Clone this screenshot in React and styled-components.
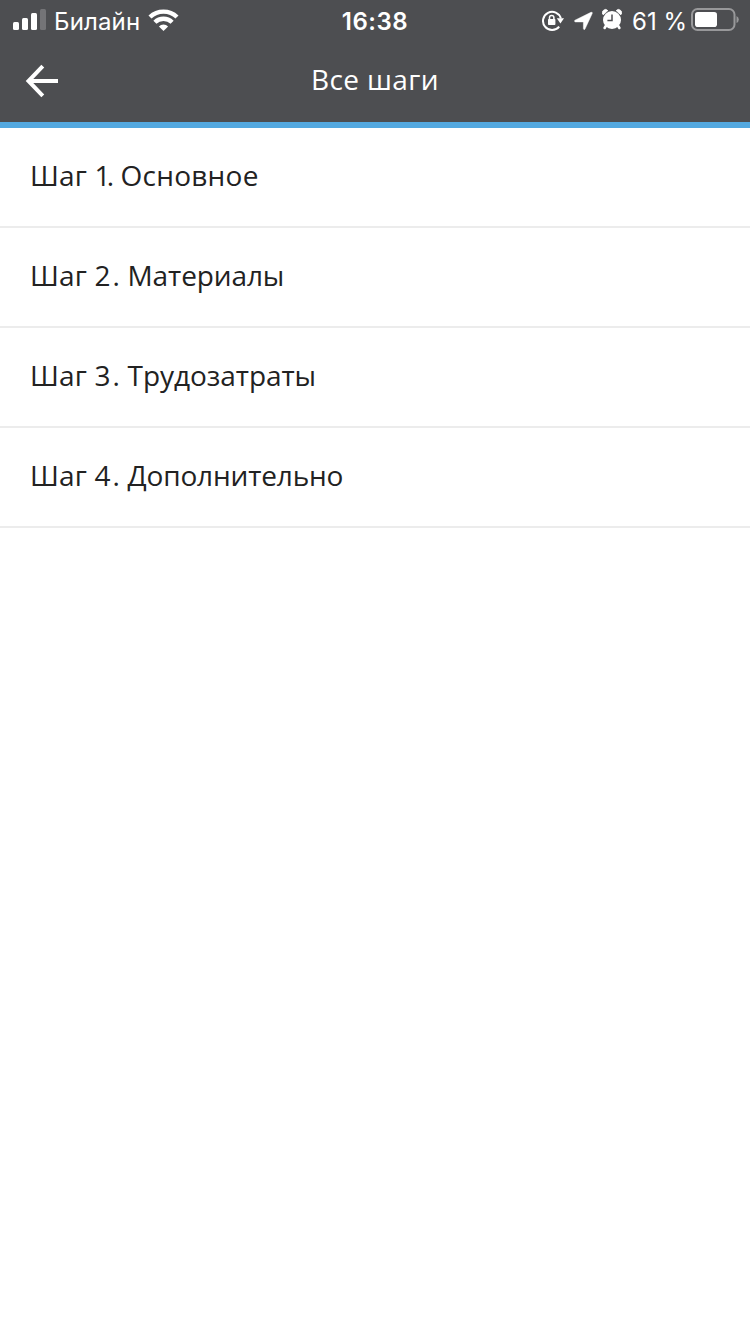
import React from "react";
import styled, { createGlobalStyle } from "styled-components";

const GlobalStyle = createGlobalStyle`
  * { box-sizing: border-box; }
  body { margin: 0; background: #fff; }
`;

const Screen = styled.div`
  width: 750px;
  min-height: 1334px;
  background: #fff;
  font-family: "Open Sans", "Noto Sans", sans-serif;
`;

const Header = styled.header`
  height: 128px;
  background: #4d4e51;
  border-bottom: 6px solid #54a9e0;
  color: #fff;
`;

const StatusBar = styled.div`
  display: grid;
  grid-template-columns: 1fr auto 1fr;
  align-items: center;
  height: 40px;
  padding: 0 11px 0 13px;
  font-family: Inter, "Liberation Sans", sans-serif;
  font-size: 24px;
  line-height: 37px;
`;

const StatusGroup = styled.div`
  display: flex;
  align-items: center;
  justify-content: ${(p) => (p.$end ? "flex-end" : "flex-start")};
  height: 40px;
`;

const StatusText = styled.span`
  letter-spacing: ${(p) => p.$spacing || 0}px;
  margin: ${(p) => p.$margin || 0};
  white-space: nowrap;
  padding-top: 3px;
`;

const Time = styled.time`
  font-weight: 600;
  letter-spacing: 0.5px;
  padding-top: 3px;
  margin-right: 2px;
`;

const Glyph = styled.svg`
  display: block;
  flex: none;
  margin-left: ${(p) => p.$gap || 0}px;
`;

const NavBar = styled.nav`
  display: grid;
  grid-template-columns: 80px 1fr 80px;
  align-items: center;
  height: 82px;
`;

const BackButton = styled.button`
  display: flex;
  align-items: center;
  height: 82px;
  padding: 0 0 0 24px;
  border: 0;
  background: none;
  color: inherit;
`;

const Title = styled.h1`
  margin: 0;
  font-size: 28px;
  font-weight: 400;
  line-height: 78px;
  height: 82px;
  text-align: center;
  letter-spacing: 0.4px;
`;

const StepList = styled.ul`
  margin: 0;
  padding: 0;
  list-style: none;
`;

const Step = styled.li`
  display: flex;
  height: 100px;
  padding-left: 30px;
  border-bottom: 2px solid #ececec;
  color: #222;
  font-size: 28px;
  line-height: 94px;
  white-space: pre;
`;

const StepNumber = styled.span`
  letter-spacing: 0.15px;
  margin-right: ${(p) => p.$gap || 0}px;
`;

const Digit = styled.span`
  letter-spacing: ${(p) => p.$spacing}px;
`;

const StepName = styled.span`
  letter-spacing: ${(p) => p.$spacing}px;
`;

const steps = [
  { number: 1, name: "Основное", digitSpacing: -3.6, gap: -1.25, spacing: 0.25 },
  { number: 2, name: "Материалы", digitSpacing: 2.15, spacing: -0.1 },
  { number: 3, name: "Трудозатраты", digitSpacing: 2.15, spacing: -0.05 },
  { number: 4, name: "Дополнительно", digitSpacing: 2.15, spacing: -0.15 },
];

const Signal = () => (
  <Glyph width="33" height="40" fill="#fff">
    <rect x="0" y="22" width="6" height="8" rx="1.5" />
    <rect x="9" y="18" width="6" height="12" rx="1.5" />
    <rect x="18" y="13" width="6" height="17" rx="1.5" />
    <rect x="27" y="9" width="6" height="21" rx="1.5" opacity="0.22" />
  </Glyph>
);

const Wifi = () => (
  <Glyph width="31" height="40" $gap={8}>
    <g fill="none" stroke="#fff" strokeWidth="4.4">
      <path d="M2 17 A19.6 19.6 0 0 1 29 17" />
      <path d="M6.9 22.2 A12.3 12.3 0 0 1 24.1 22.2" />
    </g>
    <path d="M10.9 26.4 A6.5 6.5 0 0 1 20.1 26.4 L15.5 31 Z" fill="#fff" />
  </Glyph>
);

const RotationLock = () => (
  <Glyph width="22" height="40" fill="none">
    <path d="M17.2 26.6 A9.1 9.1 0 1 1 18.9 18.5" stroke="#fff" strokeWidth="2" />
    <path d="M14.8 18.3 H22 L18.4 23.6 Z" fill="#fff" />
    <rect x="6" y="19" width="7.4" height="6" rx="0.8" fill="#fff" />
    <path d="M7.5 20 V17.6 A2.2 2.2 0 0 1 11.9 17.6 V20" stroke="#fff" strokeWidth="1.5" />
  </Glyph>
);

const Location = () => (
  <Glyph width="19" height="40" $gap={10}>
    <path
      d="M1 20.2 L17 12.3 Q18.7 11.8 18.2 13.5 L11 29 Q9.9 30.6 9.4 28.6 V21.9 H1.4 Q-0.4 21.4 1 20.2 Z"
      fill="#fff"
      stroke="#fff"
      strokeWidth="0.5"
    />
  </Glyph>
);

const Alarm = () => (
  <Glyph width="20" height="40" $gap={9}>
    <circle cx="10" cy="20" r="9" fill="#fff" />
    <path d="M3.8 26 L2.6 28 M16.2 26 L17.4 28" stroke="#fff" strokeWidth="2.6" strokeLinecap="round" />
    <path d="M1.2 14.8 A3.1 3.1 0 0 1 5.8 10.6 Z M14.2 10.6 A3.1 3.1 0 0 1 18.8 14.8 Z" fill="#fff" stroke="#fff" strokeWidth="0.9" />
    <path d="M10 14.5 V20.6 H5.4" fill="none" stroke="#4d4e51" strokeWidth="1.5" />
  </Glyph>
);

const Battery = () => (
  <Glyph width="48" height="40" $gap={4}>
    <rect x="1" y="9" width="42.5" height="21" rx="5.5" fill="none" stroke="#98989a" strokeWidth="2" />
    <rect x="4" y="12" width="22" height="15" rx="2.8" fill="#fff" />
    <path d="M45.5 16 Q47.8 17 47.8 19.5 Q47.8 22 45.5 23 Z" fill="#98989a" />
  </Glyph>
);

export default function App() {
  return (
    <Screen>
      <GlobalStyle />
      <Header>
        <StatusBar>
          <StatusGroup>
            <Signal />
            <StatusText $margin="0 0 0 8px" $spacing={0.15}>Билайн</StatusText>
            <Wifi />
          </StatusGroup>
          <Time>16:38</Time>
          <StatusGroup $end>
            <RotationLock />
            <Location />
            <Alarm />
            <StatusText $margin="0 0 0 10px">61 %</StatusText>
            <Battery />
          </StatusGroup>
        </StatusBar>
        <NavBar>
          <BackButton aria-label="Назад">
            <Glyph width="36" height="36" fill="none" stroke="#fff" strokeWidth="4">
              <path d="M34 18 H5 M18.8 3.2 L4.5 18 L18.8 32.8" />
            </Glyph>
          </BackButton>
          <Title>Все шаги</Title>
        </NavBar>
      </Header>
      <StepList>
        {steps.map((step) => (
          <Step key={step.number}>
            <StepNumber $gap={step.gap}>
              {"Шаг "}
              <Digit $spacing={step.digitSpacing}>{step.number}</Digit>
              {". "}
            </StepNumber>
            <StepName $spacing={step.spacing}>{step.name}</StepName>
          </Step>
        ))}
      </StepList>
    </Screen>
  );
}
